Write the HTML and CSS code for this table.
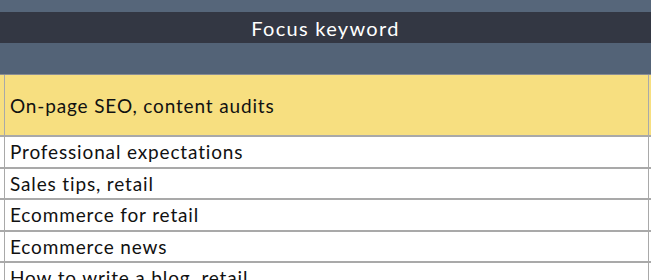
FILE: index.html
```html
<!DOCTYPE html>
<html lang="en">

<head>
    <meta charset="utf-8">
    <meta name="viewport" content="width=device-width, initial-scale=1">
    <title>Content calendar - focus keyword</title>
    <link rel="stylesheet" href="styles.css">
</head>

<body>
    <div class="sheet">
        <div class="row band"></div>

        <div class="row head">
            <div class="cell">Focus keyword</div>
        </div>

        <div class="row sub">
            <div class="cell"></div>
        </div>

        <div class="row grid highlight">
            <div class="edge"></div>
            <div class="cell">On-page SEO, content audits</div>
            <div class="edge"></div>
        </div>

        <div class="row grid">
            <div class="edge"></div>
            <div class="cell">Professional expectations</div>
            <div class="edge"></div>
        </div>
        <div class="row grid">
            <div class="edge"></div>
            <div class="cell">Sales tips, retail</div>
            <div class="edge"></div>
        </div>
        <div class="row grid">
            <div class="edge"></div>
            <div class="cell">Ecommerce for retail</div>
            <div class="edge"></div>
        </div>
        <div class="row grid">
            <div class="edge"></div>
            <div class="cell">Ecommerce news</div>
            <div class="edge"></div>
        </div>
        <div class="row grid">
            <div class="edge"></div>
            <div class="cell">How to write a blog, retail</div>
            <div class="edge"></div>
        </div>
    </div>
</body>

</html>
```

FILE: styles.css
```css
html,
body {
    margin: 0;
    padding: 0;
}

body {
    font-family: Lato, "Open Sans", sans-serif;
    color: #111;
    background-color: #fff;
    width: 651px;
    height: 280px;
    overflow: hidden;
}

.row {
    display: flex;
}

.band {
    height: 12px;
    background-color: #56667a;
}

.head {
    height: 31px;
    background-color: #333743;
}

.head .cell {
    flex: 1;
    display: flex;
    align-items: center;
    justify-content: center;
    color: #fff;
    font-size: 20px;
    letter-spacing: 1.3px;
}

.sub {
    height: 31px;
    background-color: #536377;
    border-bottom: 1px solid #8a8d93;
}

/* ordinary spreadsheet rows */
.grid {
    height: 29.5px;
    border-bottom: 2px solid #a9a9a9;
}

.grid .edge {
    width: 4px;
}

.grid .edge:last-child {
    width: 2px;
}

.grid .cell {
    flex: 1;
    display: flex;
    align-items: center;
    padding-left: 5px;
    font-size: 19px;
    letter-spacing: 0.85px;
    border-left: 1.5px solid #a9a9a9;
    border-right: 1.5px solid #a9a9a9;
    white-space: nowrap;
}

.highlight {
    height: 60px;
    background-color: #f7df80;
}
```
